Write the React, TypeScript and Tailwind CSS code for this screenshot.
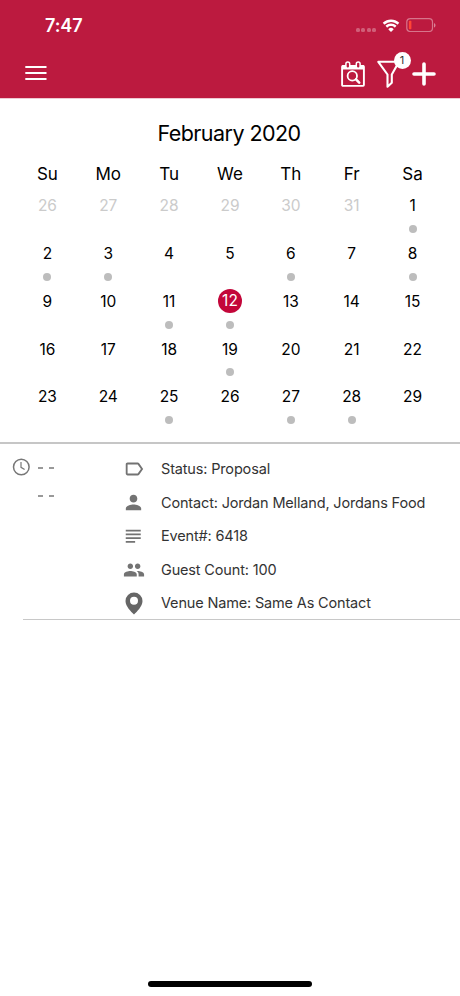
import type { ReactNode } from "react";
import { MdLabelOutline, MdPeople, MdPerson, MdSubject } from "react-icons/md";

const WEEKDAYS = ["Su", "Mo", "Tu", "We", "Th", "Fr", "Sa"];

// first row starts in January
const DAYS = [26, 27, 28, 29, 30, 31, ...Array.from({ length: 29 }, (_, i) => i + 1)];
const LEADING_DAYS = 6;
const TODAY = 12;
const EVENT_DAYS = [1, 2, 3, 6, 8, 11, 12, 19, 25, 27, 28];

export default function App() {
  return (
    <div className="flex h-[996px] w-[460px] flex-col overflow-hidden bg-white font-['Inter',sans-serif] text-black">
      <header className="h-[98px] shrink-0 bg-[#bc1a3f] text-white">
        <StatusBar />
        <NavBar />
      </header>
      <Calendar />
      <EventCard />
      <div className="mx-auto mt-auto mb-[9px] h-[6px] w-[164px] rounded-full bg-black" />
    </div>
  );
}

function StatusBar() {
  return (
    <div className="flex h-[50px] items-center pr-[24px] pl-[45px]">
      <span className="flex-1 pt-[2px] text-[18px] leading-[50px] font-semibold tracking-[-0.1px]">7:47</span>
      <div className="mt-[9px] flex gap-[1.5px]">
        {[0, 1, 2, 3].map((dot) => (
          <span key={dot} className="size-[4px] rounded-[1.5px] bg-white/30" />
        ))}
      </div>
      <svg className="mt-[1px] ml-[6px]" width="18" height="14" viewBox="0 0 18 14" fill="white">
        <path d="M9 2.9c2.4 0 4.6.9 6.3 2.500.1.1.3.1.5 0L17 4.100c.2-.2.2-.4 0-.5A11.600 11.600 0 0 0 1 3.600c-.2.1-.2.3 0 .5l1.200 1.300c.2.1.4.1.5 0A9.200 9.200 0 0 1 9 2.900z" />
        <path d="M9 7c1.300 0 2.600.5 3.500 1.400.2.1.4.1.5 0l1.300-1.300c.1-.2.1-.4 0-.5a7.700 7.700 0 0 0-10.600 0c-.1.1-.1.3 0 .5L5 8.400c.1.1.3.1.5 0C6.400 7.500 7.700 7 9 7z" />
        <path d="M11.500 10.400c.2-.1.2-.4 0-.5a3.900 3.900 0 0 0-5 0c-.2.1-.2.4 0 .5l2.200 2.300c.2.2.4.2.6 0z" />
      </svg>
      <svg className="ml-[6px]" width="30" height="14" viewBox="0 0 30 14" fill="none">
        <rect x="0.8" y="0.6" width="25.7" height="12.9" rx="3.5" stroke="white" strokeOpacity="0.4" strokeWidth="1.2" />
        <rect x="2.9" y="2.8" width="2.5" height="8.5" rx="0.8" fill="#ff4536" />
        <path d="M28 5v4.600c.9-.4 1.500-1.300 1.500-2.300S28.900 5.400 28 5z" fill="white" fillOpacity="0.45" />
      </svg>
    </div>
  );
}

function NavBar() {
  return (
    <div className="flex h-[48px] items-center pr-[24px] pl-[25px]">
      <svg className="-mt-[2px]" width="22" height="16" viewBox="0 0 22 16" fill="white">
        <path d="M.3.900h21.200V3H.3zM.3 6.900h21.200V9H.3zM.3 12.900h21.200V15H.3z" />
      </svg>
      <div className="flex-1" />
      <svg width="24" height="26" viewBox="0 0 24 26" fill="none" stroke="white">
        <rect x="1.1" y="5" width="21.8" height="19.9" rx="0.8" strokeWidth="1.9" />
        <path d="M1 4.300h22v4.200H1z" fill="white" stroke="none" />
        <rect x="4.9" y="0.9" width="3.8" height="6.4" rx="1.9" fill="#bc1a3f" strokeWidth="1.5" />
        <rect x="15.3" y="0.9" width="3.8" height="6.4" rx="1.9" fill="#bc1a3f" strokeWidth="1.5" />
        <circle cx="11.3" cy="14.9" r="4.7" strokeWidth="1.8" />
        <path d="m15 18.400 3.200 3.200" strokeWidth="2.6" strokeLinecap="round" />
      </svg>
      <div className="relative ml-[12px]">
        <svg width="24" height="28" viewBox="0 0 24 28" fill="none" stroke="white">
          <path d="M1.300 1.800h20.700L14.800 14.500v8.200l-4.300 4V14.500z" strokeWidth="2.1" strokeLinejoin="round" />
        </svg>
        <span className="absolute -top-[8px] left-[16.5px] flex size-[17px] items-center justify-center rounded-full bg-white text-[11px] text-[#333]">
          1
        </span>
      </div>
      <svg className="ml-[11px]" width="24" height="24" viewBox="0 0 24 24" stroke="white" strokeWidth="3.6" strokeLinecap="round">
        <path d="M12 2v20M2 12h20" />
      </svg>
    </div>
  );
}

function Calendar() {
  return (
    <section className="h-[346px] shrink-0 border-t border-b-2 border-t-[#eec9d2] border-b-[#c6c6c6] px-[17px]">
      <h1 className="pt-[19px] pr-[2px] text-center text-[21.5px] leading-[30px] tracking-[-0.55px]">February 2020</h1>
      <div className="mt-[13px] grid grid-cols-7 text-center text-[17px] leading-[26px]">
        {WEEKDAYS.map((day) => (
          <span key={day}>{day}</span>
        ))}
      </div>
      <div className="mt-[7px] grid auto-rows-[47.75px] grid-cols-7 text-[15.5px]">
        {DAYS.map((day, i) => (
          <Day
            key={i}
            day={day}
            muted={i < LEADING_DAYS}
            selected={i >= LEADING_DAYS && day === TODAY}
            marked={i >= LEADING_DAYS && EVENT_DAYS.includes(day)}
          />
        ))}
      </div>
    </section>
  );
}

function Day({ day, muted, selected, marked }: { day: number; muted: boolean; selected: boolean; marked: boolean }) {
  const color = selected ? "-mt-px mb-px bg-[#c3063a] pt-px text-white" : muted ? "text-[#cbcbcb]" : "text-black";
  return (
    <div className="flex flex-col items-center">
      <span className={`flex size-[24px] items-center justify-center rounded-full ${color}`}>{day}</span>
      {marked && <span className="mt-[7px] size-[8px] rounded-full bg-[#bdbdbd]" />}
    </div>
  );
}

function EventCard() {
  return (
    <section className="flex h-[176px] shrink-0">
      <div className="flex w-[111px] gap-[8px] pt-[14px] pl-[12px] text-[#777]">
        <svg width="18" height="18" viewBox="0 0 18 18" fill="none" stroke="currentColor">
          <circle cx="9.3" cy="9" r="7.8" strokeWidth="1.5" />
          <path d="M9 4v5.300l3.600 2.300" strokeWidth="1.2" />
        </svg>
        <div className="flex flex-col gap-[26px] pt-[9px]">
          <Dashes />
          <Dashes />
        </div>
      </div>
      <div className="flex flex-1 flex-col pt-[8.5px] text-[#737373]">
        <DetailRow icon={<MdLabelOutline size={22} />} text="Status: Proposal" />
        <DetailRow icon={<MdPerson size={23} />} text="Contact: Jordan Melland, Jordans Food" />
        <DetailRow icon={<MdSubject size={22.5} />} text="Event#: 6418" />
        <DetailRow icon={<MdPeople size={22} />} text="Guest Count: 100" />
        <DetailRow
          icon={
            <svg width="18" height="23" viewBox="0 0 18 23" fill="#666">
              <path
                fillRule="evenodd"
                d="M9 .5A8.500 8.500 0 0 0 .5 9c0 5.400 5.500 10.500 8.500 13.500 3-3 8.500-8.100 8.500-13.500A8.500 8.500 0 0 0 9 .5zm0 4.300a4 4 0 1 1 0 8 4 4 0 0 1 0-8z"
              />
            </svg>
          }
          text="Venue Name: Same As Contact"
        />
        <div className="-mt-px -ml-[88px] h-px shrink-0 bg-[#c8c8c8]" />
      </div>
    </section>
  );
}

function Dashes() {
  return (
    <div className="flex gap-[6px]">
      <span className="h-[2px] w-[5px] bg-[#999]" />
      <span className="h-[2px] w-[5px] bg-[#999]" />
    </div>
  );
}

function DetailRow({ icon, text }: { icon: ReactNode; text: string }) {
  return (
    <div className="flex h-[33.5px] shrink-0 items-center">
      <span className="flex w-[45px] justify-center">{icon}</span>
      <span className="ml-[5px] text-[14.5px] tracking-[-0.16px] whitespace-nowrap text-[#333]">{text}</span>
    </div>
  );
}
